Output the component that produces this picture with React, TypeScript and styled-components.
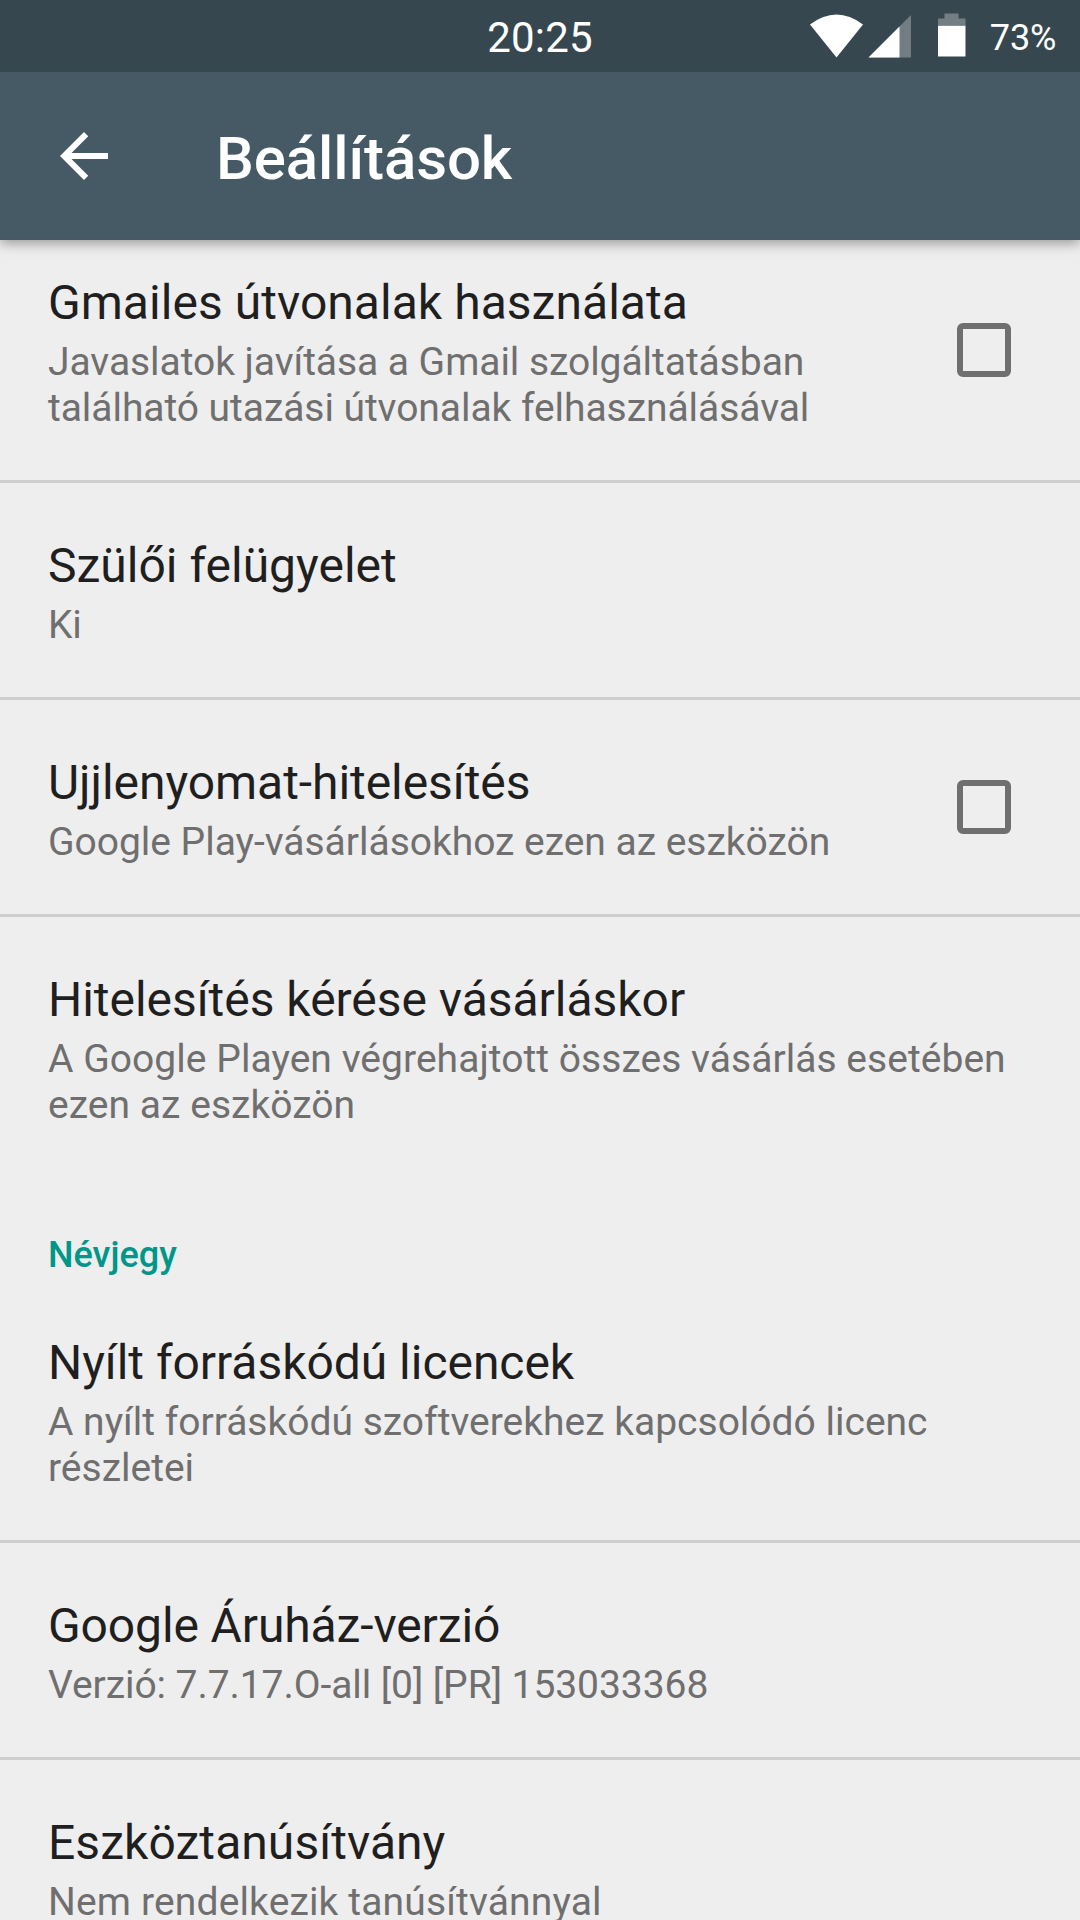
import React from 'react';
import styled, { createGlobalStyle } from 'styled-components';

const Global = createGlobalStyle`
  * { box-sizing: border-box; }
  html, body { margin: 0; background: #eeeeee; overflow: hidden; }
`;
const Screen = styled.div`
  width: 1080px; height: 1920px; overflow: hidden; display: flex; flex-direction: column;
  background: #eeeeee; font-family: Roboto, "Noto Sans", sans-serif; color: #1f1f1f;
`;
const StatusBar = styled.div`
  height: 72px; flex: none; display: grid; grid-template-columns: 1fr auto 1fr; align-items: center;
  background: #37474f; color: #fff; padding: 2px 23.5px 0; z-index: 2;
`;
const Clock = styled.span`font-size: 42px; line-height: 72px; letter-spacing: 0.15px;`;
const Indicators = styled.div`display: flex; justify-content: flex-end; align-items: center;`;
const Percent = styled.span`font-size: 36px; line-height: 72px; margin-left: 14.5px;`;
const AppBar = styled.header`
  height: 168px; flex: none; display: flex; align-items: center; background: #455a64; color: #fff;
  padding-left: 48px; z-index: 1; box-shadow: 0 3px 12px rgba(0,0,0,.38);
`;
const Title = styled.h1`margin: 6px 0 0 96px; font-size: 60px; font-weight: 500; line-height: 72px; letter-spacing: -0.1px;`;
const List = styled.main`display: flex; flex-direction: column;`;
const Row = styled.section<{ $height: number; $top?: number; $line?: boolean }>`
  flex: none; height: ${p => p.$height}px; padding: ${p => p.$top ?? 51}px 48px 0;
  display: flex; justify-content: space-between;
  border-bottom: ${p => (p.$line ? '3px solid #cecece' : 'none')};
`;
const Name = styled.div<{ $tracking: number }>`
  font-size: 48px; line-height: 64px; white-space: nowrap; letter-spacing: ${p => p.$tracking}px;
`;
const Summary = styled.div<{ $tracking: number }>`
  font-size: 39px; line-height: 46px; color: #6f6f6f; white-space: pre; margin-top: 4px;
  letter-spacing: ${p => p.$tracking}px;
`;
const Check = styled.span<{ $top: number }>`
  width: 54px; height: 54px; flex: none; border: 6px solid #6f6f6f; border-radius: 6px;
  margin: ${p => p.$top}px 21px 0 0;
`;
const Category = styled.h2`margin: 0; padding: 54px 48px 0; height: 134px; font-size: 36px; line-height: 48px; font-weight: 500; color: #009688;`;

type Item = {
  name: string; summary: string; height: number; top?: number; line?: boolean; check?: number;
  tracking: [number, number];
};
const general: Item[] = [
  { name: 'Gmailes útvonalak használata', summary: 'Javaslatok javítása a Gmail szolgáltatásban\ntalálható utazási útvonalak felhasználásával', height: 243, top: 31, line: true, check: 52, tracking: [0.04, -0.055] },
  { name: 'Szülői felügyelet', summary: 'Ki', height: 217, line: true, tracking: [0, -0.2] },
  { name: 'Ujjlenyomat-hitelesítés', summary: 'Google Play-vásárlásokhoz ezen az eszközön', height: 217, line: true, check: 29, tracking: [-0.05, -0.025] },
  { name: 'Hitelesítés kérése vásárláskor', summary: 'A Google Playen végrehajtott összes vásárlás esetében\nezen az eszközön', height: 260, tracking: [-0.03, 0.04] },
];
const about: Item[] = [
  { name: 'Nyílt forráskódú licencek', summary: 'A nyílt forráskódú szoftverekhez kapcsolódó licenc\nrészletei', height: 232, top: 20, line: true, tracking: [-0.04, 0] },
  { name: 'Google Áruház-verzió', summary: 'Verzió: 7.7.17.O-all [0] [PR] 153033368', height: 217, line: true, tracking: [-0.12, -0.06] },
  { name: 'Eszköztanúsítvány', summary: 'Nem rendelkezik tanúsítvánnyal', height: 217, tracking: [0.06, 0.15] },
];
const Setting = ({ item }: { item: Item }) => (
  <Row $height={item.height} $top={item.top} $line={item.line}>
    <div>
      <Name $tracking={item.tracking[0]}>{item.name}</Name>
      <Summary $tracking={item.tracking[1]}>{item.summary}</Summary>
    </div>
    {item.check !== undefined && <Check $top={item.check} role="checkbox" aria-checked={false} />}
  </Row>
);

export default function App() {
  return (
    <Screen>
      <Global />
      <StatusBar>
        <span />
        <Clock>20:25</Clock>
        <Indicators>
          <svg width="170" height="54" viewBox="805 10.5 170 54">
            <path d="M810 24Q836.5 4 863 24L836.5 57Z" fill="#fff" />
            <path d="M868.5 57L911 14.5V57Z" fill="#737e84" />
            <path d="M868.5 57L899.5 26V57Z" fill="#fff" />
            <path d="M938 25H965.5V56H938Z" fill="#fff" />
            <path d="M938 18H944.5V13H958.5V18H965.5V25H938Z" fill="#737e84" />
          </svg>
          <Percent>73%</Percent>
        </Indicators>
      </StatusBar>
      <AppBar>
        <svg width="72" height="72" viewBox="0 0 24 24" fill="#fff"><path d="M20 11H7.83l5.59-5.59L12 4l-8 8 8 8 1.41-1.41L7.83 13H20v-2z" /></svg>
        <Title>Beállítások</Title>
      </AppBar>
      <List>
        {general.map(i => <Setting key={i.name} item={i} />)}
        <Category>Névjegy</Category>
        {about.map(i => <Setting key={i.name} item={i} />)}
      </List>
    </Screen>
  );
}
